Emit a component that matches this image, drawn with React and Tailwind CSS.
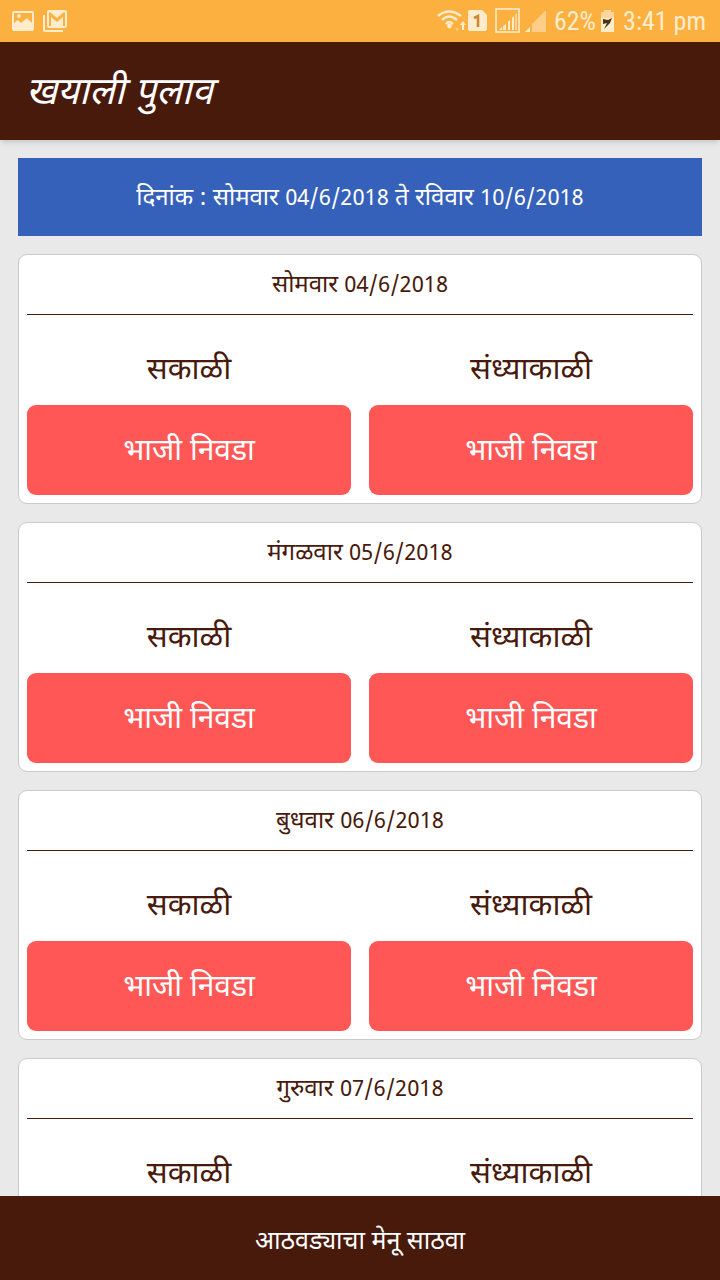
const days = [
  { name: "सोमवार", date: "04/6/2018" },
  { name: "मंगळवार", date: "05/6/2018" },
  { name: "बुधवार", date: "06/6/2018" },
  { name: "गुरुवार", date: "07/6/2018" },
];

function StatusBar() {
  return (
    <div className="flex h-[42px] shrink-0 items-center justify-between bg-[#fcb040] pl-3 pr-[14px] text-[#feeccd]">
      <div className="flex items-center gap-2">
        {/* Screenshot notification */}
        <svg width="22" height="22" viewBox="0 0 22 22" fill="currentColor">
          <path
            fillRule="evenodd"
            d="M2 1h18a2 2 0 0 1 2 2v16a2 2 0 0 1-2 2H2a2 2 0 0 1-2-2V3a2 2 0 0 1 2-2zM2 13l4-3 3 3 6-5 5 5V3H2zM7 4a2 2 0 1 1 0 4 2 2 0 0 1 0-4z"
          />
        </svg>
        {/* Mail notification */}
        <svg width="26" height="24" viewBox="0 0 26 24" fill="currentColor">
          <path d="M1 6h2v15h18v2H3a2 2 0 0 1-2-2z" />
          <path
            fillRule="evenodd"
            d="M7 1h16a2 2 0 0 1 2 2v14a2 2 0 0 1-2 2H7a2 2 0 0 1-2-2V3a2 2 0 0 1 2-2zM7 4v13h2V8l6 5 6-5v9h2V4l-1-1-7 6-7-6z"
          />
        </svg>
      </div>

      <div className="flex items-center font-[Roboto_Condensed,Roboto,sans-serif] text-[26px] leading-none">
        {/* Wifi */}
        <svg width="30" height="24" viewBox="0 0 30 24" fill="none" stroke="currentColor">
          <path d="M1 7Q12-2 24 7M5 11Q12 4 20 11M9 15Q12 11 16 15" strokeWidth="2.4" />
          <circle cx="12.5" cy="17" r="2.4" fill="currentColor" stroke="none" />
          <path d="M26 12l3 4h-2v5h-2v-5h-2z" fill="currentColor" stroke="none" />
          <path d="M20 22l-2-3h4z" fill="currentColor" stroke="none" opacity="0.5" />
        </svg>
        {/* Sim card */}
        <svg className="ml-px" width="19" height="22" viewBox="0 0 19 22">
          <path d="M2 0h12l5 5v14a2 2 0 0 1-2 2H2a2 2 0 0 1-2-2V2a2 2 0 0 1 2-2z" fill="currentColor" />
          <path d="M6 8l4-2v11" stroke="#c98a30" strokeWidth="2.6" fill="none" />
        </svg>
        {/* Signal, first sim */}
        <svg className="ml-2" width="26" height="26" viewBox="0 0 26 26" fill="currentColor">
          <rect x="1" y="1" width="23" height="23" fill="none" stroke="currentColor" strokeWidth="1.6" />
          <path d="M4 22l3-3v3zM8 18l3-2v6H8zM13 14l2-2v10h-2zM17 10l2-2v14h-2z" />
          <path d="M20 7l2-2v17h-2z" opacity="0.6" />
        </svg>
        {/* Signal, second sim */}
        <svg className="ml-1" width="21" height="23" viewBox="0 0 21 23" fill="currentColor">
          <path d="M0 22l5-5v5z" />
          <path d="M7 22v-8L21 0v22z" opacity="0.5" />
        </svg>
        <span className="ml-2">62%</span>
        {/* Battery, charging */}
        <svg className="ml-1 mr-2" width="15" height="24" viewBox="0 0 15 24">
          <path d="M4 1h7v2h3v20H1V3h3z" fill="currentColor" />
          <path d="M4 1h7v2h3v6H1V3h3z" fill="#fcb040" opacity="0.35" />
          <path d="M3 10l5 1 4-2-2 5-6 6 3-6-4 1z" fill="#4a3413" />
        </svg>
        <span>3:41 pm</span>
      </div>
    </div>
  );
}

function DateText({ children }) {
  return <span className="text-[22px]">{children}</span>;
}

function Meal({ label }) {
  return (
    <div className="flex-1">
      <h3 className="pt-9 pb-3 text-center text-[31px] leading-[42px]">{label}</h3>
      <button
        type="button"
        aria-label={`${label} भाजी निवडा`}
        className="h-[90px] w-full rounded-[9px] bg-[#ff5755] pt-1 text-[30px] text-white"
      >
        भाजी निवडा
      </button>
    </div>
  );
}

function DayCard({ day }) {
  return (
    <section className="shrink-0 rounded-[9px] border border-[#c8cacc] bg-white px-2 pb-2 text-[#481a0c]">
      <h2 className="border-b border-[#481a0c] pt-1 text-center text-2xl leading-[55px]">
        {day.name} <DateText>{day.date}</DateText>
      </h2>
      <div className="flex gap-[18px]">
        <Meal label="सकाळी" />
        <Meal label="संध्याकाळी" />
      </div>
    </section>
  );
}

function App() {
  return (
    <div className="flex h-screen flex-col bg-[#e9e9e9] font-[Noto_Sans_Devanagari,Noto_Sans,sans-serif]">
      <StatusBar />
      <header className="z-10 flex h-[98px] shrink-0 items-center bg-[#481a0c] px-[26px] pt-2 shadow-md">
        <h1 className="text-[38px] italic text-white">खयाली पुलाव</h1>
      </header>

      <main className="flex min-h-0 flex-1 flex-col gap-[18px] overflow-y-auto p-[18px] [scrollbar-width:none]">
        <div className="shrink-0 bg-[#3561ba] pt-[5px] text-center text-2xl leading-[73px] text-white">
          दिनांक : सोमवार <DateText>04/6/2018</DateText> ते रविवार <DateText>10/6/2018</DateText>
        </div>
        {days.map((day) => (
          <DayCard key={day.date} day={day} />
        ))}
      </main>

      <button type="button" className="h-[84px] shrink-0 bg-[#481a0c] pt-3 text-[25px] text-white">
        आठवड्याचा मेनू साठवा
      </button>
    </div>
  );
}

export default App;
